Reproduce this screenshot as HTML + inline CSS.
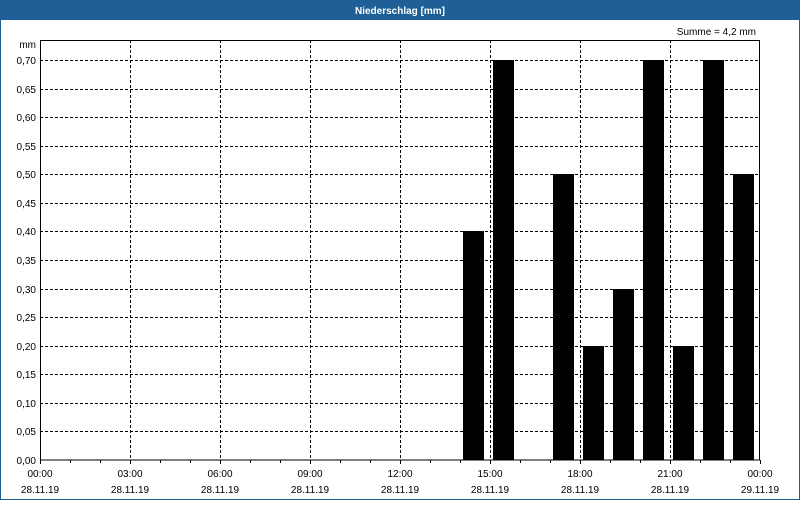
<!DOCTYPE html>
<html><head><meta charset="utf-8"><style>
body{margin:0;width:800px;height:500px;overflow:hidden;background:#fff;font-family:"Liberation Sans",sans-serif}
</style></head><body>
<svg width="800" height="500" xmlns="http://www.w3.org/2000/svg" font-family="Liberation Sans, sans-serif" font-size="10">
<rect x="0" y="0" width="800" height="500" fill="#fff"/>
<rect x="0.5" y="0.5" width="799" height="499" fill="none" stroke="#1d5f96" stroke-width="1"/>
<rect x="0" y="0" width="800" height="20" fill="#1d5f96"/>
<text x="400" y="14" fill="#fff" font-weight="bold" font-size="10" text-anchor="middle">Niederschlag [mm]</text>
<text x="756" y="35" text-anchor="end">Summe = 4,2 mm</text>
<text x="36" y="48" text-anchor="end">mm</text>
<g stroke="#000" stroke-width="1" stroke-dasharray="3,2" fill="none">
<path d="M40 60.5H760M40 89.5H760M40 117.5H760M40 146.5H760M40 174.5H760M40 203.5H760M40 231.5H760M40 260.5H760M40 289.5H760M40 317.5H760M40 346.5H760M40 374.5H760M40 403.5H760M40 431.5H760"/>
<path d="M130.5 40V460M220.5 40V460M310.5 40V460M400.5 40V460M490.5 40V460M580.5 40V460M670.5 40V460"/>
</g>
<g fill="#000">
<rect x="463" y="231" width="21" height="229"/>
<rect x="493" y="60" width="21" height="400"/>
<rect x="553" y="174" width="21" height="286"/>
<rect x="583" y="346" width="21" height="114"/>
<rect x="613" y="289" width="21" height="171"/>
<rect x="643" y="60" width="21" height="400"/>
<rect x="673" y="346" width="21" height="114"/>
<rect x="703" y="60" width="21" height="400"/>
<rect x="733" y="174" width="21" height="286"/>
</g>
<rect x="40.5" y="40.5" width="719" height="419.5" fill="none" stroke="#000"/>
<g stroke="#000">
<path d="M40.5 460V464M70.5 460V463M100.5 460V463M130.5 460V464M160.5 460V463M190.5 460V463M220.5 460V464M250.5 460V463M280.5 460V463M310.5 460V464M340.5 460V463M370.5 460V463M400.5 460V464M430.5 460V463M460.5 460V463M490.5 460V464M520.5 460V463M550.5 460V463M580.5 460V464M610.5 460V463M640.5 460V463M670.5 460V464M700.5 460V463M730.5 460V463M760.5 460V464"/>
</g>
<g text-anchor="end">
<text x="36" y="64">0,70</text><text x="36" y="93">0,65</text><text x="36" y="121">0,60</text><text x="36" y="150">0,55</text><text x="36" y="178">0,50</text><text x="36" y="207">0,45</text><text x="36" y="235">0,40</text><text x="36" y="264">0,35</text><text x="36" y="293">0,30</text><text x="36" y="321">0,25</text><text x="36" y="350">0,20</text><text x="36" y="378">0,15</text><text x="36" y="407">0,10</text><text x="36" y="435">0,05</text><text x="36" y="464">0,00</text>
</g>
<g text-anchor="middle">
<text x="40" y="477">00:00</text><text x="40" y="493">28.11.19</text>
<text x="130" y="477">03:00</text><text x="130" y="493">28.11.19</text>
<text x="220" y="477">06:00</text><text x="220" y="493">28.11.19</text>
<text x="310" y="477">09:00</text><text x="310" y="493">28.11.19</text>
<text x="400" y="477">12:00</text><text x="400" y="493">28.11.19</text>
<text x="490" y="477">15:00</text><text x="490" y="493">28.11.19</text>
<text x="580" y="477">18:00</text><text x="580" y="493">28.11.19</text>
<text x="670" y="477">21:00</text><text x="670" y="493">28.11.19</text>
<text x="760" y="477">00:00</text><text x="760" y="493">29.11.19</text>
</g>
</svg>
</body></html>
